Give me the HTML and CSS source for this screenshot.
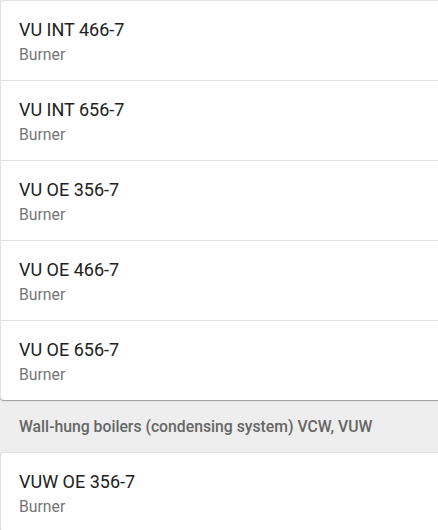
FILE: index.html
```html
<!DOCTYPE html>
<html lang="en">
<head>
<meta charset="utf-8">
<link rel="stylesheet" href="styles.css">
</head>
<body>
<div class="page">
  <div class="card">
    <div class="row"><div class="title">VU INT 466-7</div><div class="sub">Burner</div></div>
    <div class="row"><div class="title">VU INT 656-7</div><div class="sub">Burner</div></div>
    <div class="row"><div class="title">VU OE 356-7</div><div class="sub">Burner</div></div>
    <div class="row"><div class="title">VU OE 466-7</div><div class="sub">Burner</div></div>
    <div class="row"><div class="title">VU OE 656-7</div><div class="sub">Burner</div></div>
  </div>
  <div class="section">Wall-hung boilers (condensing system) VCW, VUW</div>
  <div class="card">
    <div class="row"><div class="title">VUW OE 356-7</div><div class="sub">Burner</div></div>
  </div>
</div>
</body>
</html>
```
FILE: styles.css
```css
html, body {
  margin: 0;
  padding: 0;
  background: #eeeeee;
  overflow: hidden;
}
.page {
  width: 448px;
  font-family: Roboto, "Liberation Sans", sans-serif;
}
.card {
  background: #ffffff;
  border: 1px solid #e2e2e2;
  border-bottom: 0;
  border-radius: 4px;
  box-shadow: 0 1px 1px rgba(0, 0, 0, 0.35);
}
.row {
  padding: 17px 18px 15px;
  height: 47px;
  display: flex;
  flex-direction: column;
  gap: 3px;
}
.row + .row {
  border-top: 1px solid #e0e0e0;
}
.title {
  font-size: 18px;
  line-height: 24px;
  color: #212121;
}
.sub {
  font-size: 15.75px;
  line-height: 20px;
  color: #757575;
}
.section {
  padding: 17px 19px 15px;
  font-size: 15.75px;
  line-height: 20px;
  font-weight: 500;
  color: #666666;
}
```
